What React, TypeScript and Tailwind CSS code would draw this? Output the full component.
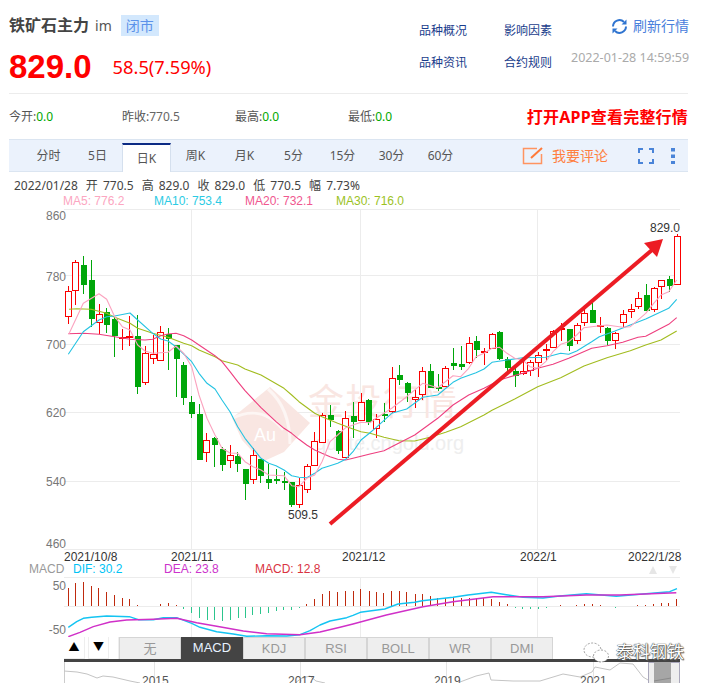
import React from "react";

const cjk = "font-['Noto_Sans','Noto_Sans_CJK_SC',sans-serif]";

// [wickTop, bodyTop, bodyBottom, wickBottom, red?]
const C: [number, number, number, number, number][] = [
  [243,259,334,357,1],[165,172,256,300,1],[153,180,240,267,0],[165,225,342,365,0],[296,328,352,388,1],
  [310,322,360,384,0],[335,342,393,455,0],[372,397,400,436,1],[334,393,396,424,1],[330,393,545,566,0],
  [424,445,532,540,1],[390,447,458,476,1],[364,382,464,466,1],[369,387,402,494,0],[420,420,462,576,0],
  [472,480,578,600,0],[574,592,626,638,0],[597,627,765,765,0],[684,706,742,770,1],[696,700,720,785,0],
  [726,732,780,798,0],[720,751,764,788,1],[740,754,777,802,0],[792,792,836,885,0],[728,751,821,838,1],
  [762,762,812,834,0],[776,822,834,852,0],[792,822,828,838,0],[802,828,834,855,0],[832,832,900,905,0],
  [820,840,898,908,1],[776,784,853,864,1],[680,709,781,782,1],[625,631,710,710,1],[600,631,646,665,0],
  [676,679,737,746,0],[618,640,755,760,1],[592,633,650,698,0],[563,592,644,644,1],[582,586,650,660,0],
  [628,643,670,698,1],[595,628,634,650,0],[487,520,618,625,1],[480,510,525,540,0],[532,534,564,592,0],
  [556,577,583,610,1],[487,499,566,585,1],[477,498,548,548,0],[507,547,552,558,0],[483,490,542,545,1],
  [428,474,482,496,0],[422,478,485,495,0],[396,415,472,478,1],[393,408,434,458,0],[430,438,441,480,1],
  [383,388,430,432,1],[378,381,461,464,0],[456,461,488,498,0],[485,499,513,546,0],[458,497,503,510,1],
  [465,472,496,512,1],[440,449,470,516,1],[418,432,436,468,1],[376,377,425,430,1],[354,369,372,408,1],
  [372,372,422,438,0],[354,361,406,416,1],[312,325,350,362,1],[295,316,353,353,0],[336,361,364,384,1],
  [366,370,407,420,0],[382,383,406,432,1],[314,328,352,366,1],[298,313,319,338,1],[262,278,304,312,1],
  [236,271,317,318,0],[246,250,311,322,1],[224,226,244,282,1],[212,223,242,262,0],[88,92,238,238,1],
];

const cx = (i: number) => Math.round(67.7 + 7.71 * i);
const Y = (z: number) => 205 + z / 3;

const path = (a: number[][], b: number[][]) =>
  [...a.map(([x, y]) => [50 + x / 3, Y(y)]), ...b.map(([x, y]) => [370 + x / 3, Y(y)])]
    .map(([x, y]) => `${x.toFixed(1)},${y.toFixed(1)}`)
    .join(" ");

const MA5 = path(
  [[57,386],[100,295],[147,266],[170,283],[194,335],[217,365],[240,375],[263,420],[285,438],[308,445],[354,442],[378,423],[401,445],[425,485],[447,570],[471,640],[495,690],[516,730],[540,744],[563,745],[585,770],[609,785],[633,795],[656,810],[702,812],[725,842],[747,845],[770,820],[794,810],[816,770],[840,710],[863,690],[887,668],[909,660],[933,652]],
  [[0,653],[18,640],[65,610],[110,575],[158,535],[203,548],[249,512],[272,515],[296,490],[318,455],[342,445],[366,430],[389,427],[411,445],[434,460],[458,465],[480,485],[503,490],[527,470],[549,440],[572,418],[596,410],[620,390],[642,368],[665,365],[711,360],[758,367],[781,365],[827,325],[851,295],[873,270],[896,260],[920,225]]
);
const MA10 = path(
  [[55,448],[100,380],[147,345],[170,335],[194,333],[240,324],[263,345],[308,385],[332,402],[354,408],[378,425],[401,447],[425,470],[447,505],[471,535],[495,552],[516,585],[540,620],[563,665],[585,700],[609,730],[633,760],[656,775],[678,782],[702,795],[725,812],[747,817],[770,818],[794,805],[816,790],[840,782],[863,775],[887,763],[909,740],[933,705]],
  [[0,683],[18,668],[65,625],[110,612],[158,577],[203,570],[249,532],[272,520],[318,503],[342,492],[366,472],[411,465],[458,458],[527,457],[572,445],[596,448],[620,438],[665,410],[688,395],[735,378],[781,360],[827,342],[896,310],[920,283]]
);
const MA20 = path(
  [[55,386],[100,385],[147,388],[194,395],[240,403],[285,405],[308,403],[332,392],[354,387],[378,385],[401,392],[425,405],[447,420],[495,452],[516,470],[540,500],[563,530],[585,557],[633,608],[678,650],[702,670],[725,685],[747,703],[770,720],[794,735],[816,745],[840,755],[863,763],[887,765],[909,760],[933,754]],
  [[0,747],[42,737],[65,725],[134,690],[203,640],[249,600],[296,570],[342,550],[389,525],[411,518],[458,505],[503,490],[549,478],[596,460],[665,430],[711,422],[758,412],[804,397],[827,394],[873,370],[896,358],[920,338]]
);
const MA30 = path(
  [[57,313],[80,311],[123,313],[170,325],[194,337],[240,355],[263,370],[308,385],[354,397],[401,415],[425,422],[447,435],[495,455],[516,467],[563,480],[585,492],[633,510],[702,550],[725,570],[747,590],[794,625],[816,635],[863,655],[909,672],[933,680]],
  [[0,685],[42,697],[87,707],[134,708],[180,697],[227,682],[272,665],[342,630],[366,616],[434,582],[503,545],[572,518],[642,483],[711,458],[781,437],[827,420],[873,405],[920,378]]
);

const M = (a: number[][], b: number[][]) =>
  [...a.map(([x, y]) => [x / 3, 540 + y / 3]), ...b.map(([x, y]) => [353 + x / 3, 540 + y / 3])]
    .map(([x, y]) => `${x.toFixed(1)},${y.toFixed(1)}`)
    .join(" ");
const DIF = M(
  [[205,262],[230,245],[250,235],[275,232],[320,228],[388,230],[415,239],[460,239],[490,233],[530,233],[575,250],[600,262],[650,275],[700,282],[740,289],[800,287],[860,288],[900,284],[930,272],[960,255],[990,243],[1040,233]],
  [[0,226],[22,217],[95,207],[135,192],[185,187],[208,182],[300,172],[345,165],[415,157],[460,164],[510,172],[570,174],[620,168],[700,161],[790,169],[870,162],[950,155],[972,146]]
);
const DEA = M(
  [[205,290],[240,277],[280,260],[330,246],[380,240],[460,238],[530,235],[590,248],[650,259],[730,273],[800,281],[900,284],[960,276],[1020,262]],
  [[0,252],[100,225],[210,200],[300,185],[420,170],[570,170],[700,165],[800,165],[970,158]]
);

const barsA = [[205,145],[226,128],[250,127],[274,138],[295,145],[319,155],[343,165],[367,174],[388,178],[411,196],[436,197],[481,193],[505,190],[527,194],[550,206],[574,218],[597,235],[620,240],[643,241],[667,243],[690,240],[713,235],[736,235],[757,225],[780,222],[805,219],[829,214],[850,210],[874,210],[897,204],[918,193],[943,177],[967,162],[988,153],[1012,157],[1036,153]];
const barsB = [[0,152],[22,148],[47,153],[70,155],[91,160],[115,153],[139,153],[160,156],[185,162],[208,162],[232,168],[253,174],[277,174],[301,172],[325,174],[347,174],[370,175],[391,175],[415,177],[439,185],[463,193],[485,203],[508,206],[532,207],[554,207],[578,203],[622,195],[670,195],[694,192],[716,192],[740,195],[763,202],[785,203],[853,195],[877,195],[900,192],[925,189],[946,190],[970,177]];
const bars = [...barsA.map(([x, y]) => [x / 3, y]), ...barsB.map(([x, y]) => [353 + x / 3, y])];

const axis = { fontFamily: "'Liberation Sans',sans-serif", fontSize: 12 };

function MainChart() {
  return (
    <svg width="706" height="429" viewBox="0 208 706 429" className="block">
      {/* Grid */}
      <g stroke="#ececec" strokeWidth="1" shapeRendering="crispEdges">
        {[209, 275, 344, 412, 481, 549, 577, 606, 637].map((y) => (
          <line key={y} x1="64" x2="680" y1={y + 0.5} y2={y + 0.5} />
        ))}
        {[191, 360, 537].map((x) => (
          <React.Fragment key={x}>
            <line x1={x + 0.5} x2={x + 0.5} y1="209" y2="549" />
            <line x1={x + 0.5} x2={x + 0.5} y1="577" y2="637" />
          </React.Fragment>
        ))}
      </g>
      {/* Site watermark */}
      <g>
        <path d="M232 418 L270 387 L310 423 L284 452 L262 462 L242 440 Z" fill="#f9e6e2" />
        <path d="M233 418 Q262 404 283 430" fill="none" stroke="#fdf6f4" strokeWidth="2.5" />
        <path d="M268 389 Q290 408 290 444" fill="none" stroke="#fdf6f4" strokeWidth="3" />
        <text x="254" y="441" fontSize="18" fill="#ffffff" fontFamily="'Liberation Sans',sans-serif">Au</text>
        <text x="308" y="415" fontSize="36" fill="#f9e6e2" fontFamily="'Noto Sans CJK SC',sans-serif" letterSpacing="1.5">金投行情</text>
        <text x="315" y="450" fontSize="20" fill="#eeeeee" fontFamily="'Liberation Sans',sans-serif">quote.cngold.org</text>
      </g>
      {/* Candles */}
      {C.map(([wt, bt, bb, wb, red], i) => {
        const x = cx(i);
        const top = Math.round(Y(bt));
        const h = Math.max(1, Math.round(Y(bb)) - top);
        const col = red ? "#fa0000" : "#00a60a";
        return (
          <g key={i} shapeRendering="crispEdges">
            <line x1={x + 0.5} x2={x + 0.5} y1={Y(wt)} y2={Y(wb)} stroke={col} strokeWidth="1" />
            {red ? (
              <rect x={x - 2.5} y={top + 0.5} width="6" height={h} fill="#fff" stroke={col} strokeWidth="1" />
            ) : (
              <rect x={x - 2.5} y={top} width="6" height={h} fill={col} />
            )}
          </g>
        );
      })}
      {/* Averages */}
      <g fill="none" strokeWidth="1.1" strokeLinejoin="round">
        <polyline points={MA30} stroke="#a2bc1f" />
        <polyline points={MA20} stroke="#ee3f7f" />
        <polyline points={MA10} stroke="#25c3e2" />
        <polyline points={MA5} stroke="#fba3bf" />
      </g>
      {/* Axis labels */}
      <g {...axis} fill="#777">
        {[["860", 220], ["780", 281], ["700", 349], ["620", 417], ["540", 486], ["460", 548]].map(([t, y]) => (
          <text key={t} x="66" y={y} textAnchor="end">{t}</text>
        ))}
        <text x="66" y="590" textAnchor="end">50</text>
        <text x="66" y="634" textAnchor="end">-50</text>
      </g>
      <g {...axis} fill="#333">
        <text x="288" y="519">509.5</text>
        <text x="650" y="232">829.0</text>
        <text x="64" y="561">2021/10/8</text>
        <text x="171" y="561">2021/11</text>
        <text x="342" y="561">2021/12</text>
        <text x="520" y="561">2022/1</text>
        <text x="628" y="561">2022/1/28</text>
      </g>
      <g {...axis}>
        <text x="29" y="573" fill="#999">MACD</text>
        <text x="73" y="573" fill="#00c3f5">DIF: 30.2</text>
        <text x="164" y="573" fill="#cc33cc">DEA: 23.8</text>
        <text x="255" y="573" fill="#d9333f">MACD: 12.8</text>
      </g>
      <path d="M649 574 L657 574 L653 566 Z M669 566 L677 566 L673 574 Z" fill="#e6e6e6" />
      {/* MACD */}
      <g strokeWidth="1" shapeRendering="crispEdges">
        {bars.map(([x, y], i) => {
          const rx = Math.round(x) + 0.5;
          const d = y > 199;
          return (
            <line key={i} x1={rx} x2={rx} y1={d ? 607 : 606} y2={540 + y / 3} stroke={d ? "#2cc58d" : "#bf2a0e"} />
          );
        })}
      </g>
      <g fill="none" strokeWidth="1.4" strokeLinejoin="round">
        <polyline points={DIF} stroke="#14c4f2" />
        <polyline points={DEA} stroke="#d030c8" />
      </g>
      {/* Trend arrow */}
      <line x1="330" y1="524" x2="652" y2="250" stroke="#ec1c24" strokeWidth="4" />
      <path d="M663 239 L644 243 L657 257 Z" fill="#ec1c24" />
    </svg>
  );
}

function Navigator() {
  return (
    <svg width="706" height="21" viewBox="0 662 706 21" className="block">
      <g stroke="#e4e4e4" shapeRendering="crispEdges">
        <line x1="64.5" x2="64.5" y1="662" y2="683" stroke="#ccc" />
        {[154, 300, 446, 593].map((x) => (
          <line key={x} x1={x + 0.5} x2={x + 0.5} y1="662" y2="683" />
        ))}
      </g>
      <polyline points="64,671 77,672 87,674 97,678 103,676 113,677 130,681 140,683" fill="none" stroke="#c4c4c4" />
      <polyline points="295,683 302,678 310,676 316,681 325,683" fill="none" stroke="#c4c4c4" />
      <polyline
        points="460,682 476,676 489,673 491,680 513,681 540,681 563,674 580,677 592,672 595,667 610,670 620,663 633,664 643,677 648,680"
        fill="none"
        stroke="#c4c4c4"
      />
      <g {...axis} fill="#555">
        <text x="142" y="685">2015</text>
        <text x="288" y="685">2017</text>
        <text x="434" y="685">2019</text>
        <text x="580" y="685">2021</text>
      </g>
      <rect x="648.5" y="662.5" width="31" height="22" fill="#eeeeee" stroke="#aaa8bc" shapeRendering="crispEdges" />
      <rect x="654" y="662" width="17" height="21" fill="#a6a6a6" />
      <polyline points="654,681 671,678" fill="none" stroke="#8a8a8a" />
    </svg>
  );
}

const tabs = ["分时", "5日", "日K", "周K", "月K", "5分", "15分", "30分", "60分"];
const pickers = ["无", "MACD", "KDJ", "RSI", "BOLL", "WR", "DMI"];
const quote = ["2022/01/28", "开 770.5", "高 829.0", "收 829.0", "低 770.5", "幅 7.73%"];

function Stat({ label, value, green = true }: { label: string; value: string; green?: boolean }) {
  return (
    <div className="w-[113px] whitespace-nowrap text-[12px] text-[#555]">
      {label}:<span className={green ? "text-[#00a800]" : "text-[#666]"}>{value}</span>
    </div>
  );
}

export default function App() {
  return (
    <div className={`relative h-[683px] w-[706px] overflow-hidden bg-white ${cjk}`}>
      <div className="ml-[9px] w-[679px]">
        {/* Header */}
        <div className="flex h-[94px] border-b border-[#ececec]">
          <div className="w-[410px] shrink-0 pt-[15px]">
            <div className="flex h-[21px] items-center">
              <span className="text-[16px] leading-[21px] font-bold text-[#444]">铁矿石主力</span>
              <span className="ml-[6px] text-[14px] leading-[21px] text-[#555]">im</span>
              <span className="ml-[9px] flex h-[21px] w-[38px] items-center justify-center bg-[#d3e8fd] text-[14px] text-[#5c92ea]">
                闭市
              </span>
            </div>
            <div className="mt-[13px] flex items-center">
              <span className="font-['Liberation_Sans',sans-serif] text-[33px] leading-[36px] font-bold text-[#f00]">
                829.0
              </span>
              <span className="ml-[21px] text-[18.3px] leading-[24px] text-[#f00]">58.5(7.59%)</span>
            </div>
          </div>
          <div className="grid h-fit w-[152px] shrink-0 grid-cols-[85px_67px] gap-y-[16px] pt-[23px] text-[12px] leading-[16px] text-[#1a3d8c]">
            <span className="whitespace-nowrap">品种概况</span>
            <span className="whitespace-nowrap">影响因素</span>
            <span className="whitespace-nowrap">品种资讯</span>
            <span className="whitespace-nowrap">合约规则</span>
          </div>
          <div className="flex flex-1 flex-col items-end pt-[16px]">
            <div className="flex items-center gap-[5px] text-[14px] leading-[20px] whitespace-nowrap text-[#4a80dc]">
              <svg width="17" height="17" viewBox="0 0 17 17" fill="none">
                <path d="M2 8.5a6.5 6.5 0 0 1 11-4.5" stroke="#2f74d0" strokeWidth="2" />
                <path d="M15 8.5a6.5 6.5 0 0 1-11 4.5" stroke="#2f74d0" strokeWidth="2" />
                <path d="M15.5 1.5v5h-5z M1.5 15.5v-5h5z" fill="#2f74d0" />
              </svg>
              刷新行情
            </div>
            <div className="mt-[13px] text-[12.5px] leading-[18px] whitespace-nowrap text-[#aaa]">2022-01-28 14:59:59</div>
          </div>
        </div>
        {/* Stats */}
        <div className="flex h-[45px] items-center justify-between">
          <div className="flex">
            <Stat label="今开" value="0.0" />
            <Stat label="昨收" value="770.5" green={false} />
            <Stat label="最高" value="0.0" />
            <Stat label="最低" value="0.0" />
          </div>
          <div className="text-[16px] font-bold tracking-[0.2px] whitespace-nowrap text-[#f00]">打开APP查看完整行情</div>
        </div>
        {/* Tabs */}
        <div className="flex h-[33px] items-stretch border-y border-[#dbe5f1] bg-[#ebf2fc] pl-[15px]">
          {tabs.map((t) =>
            t === "日K" ? (
              <div
                key={t}
                className="mt-[3px] -mb-px flex w-[49px] items-center justify-center border-x border-t-[2px] border-x-[#d5e0ee] border-t-[#0c2b84] bg-white text-[12px] text-[#555]"
              >
                {t}
              </div>
            ) : (
              <div key={t} className="flex w-[49px] items-center justify-center text-[12px] text-[#555]">
                {t}
              </div>
            )
          )}
          <div className="ml-[57px] flex items-center">
            <svg width="22" height="18" viewBox="0 0 22 18" fill="none">
              <path d="M15 1.5H1.5v15h18V7" stroke="#ff9460" strokeWidth="1.5" />
              <path d="M9 11 L20 1" stroke="#ff7a3a" strokeWidth="2" />
            </svg>
            <span className="ml-[8px] text-[14px] whitespace-nowrap text-[#ff7f3f]">我要评论</span>
          </div>
          <div className="ml-[30px] flex items-center">
            <svg width="16" height="16" viewBox="0 0 16 16" fill="none" stroke="#4a84d8" strokeWidth="2">
              <path d="M1 5V1h4M11 1h4v4M15 11v4h-4M5 15H1v-4" />
            </svg>
            <svg className="ml-[16px]" width="6" height="16" viewBox="0 0 6 16" fill="#4a84d8">
              <rect x="1" y="0" width="4" height="3.5" />
              <rect x="1" y="6.5" width="4" height="3.5" />
              <rect x="1" y="13" width="4" height="3" />
            </svg>
          </div>
        </div>
      </div>
      {/* Quote lines */}
      <div className="ml-[14px] flex h-[14px] gap-[8px] pt-[6px] text-[12px] leading-[15px] whitespace-nowrap text-[#444] [word-spacing:2px]">
        {quote.map((q) => (
          <span key={q}>{q}</span>
        ))}
      </div>
      <div className="mt-[8px] ml-[63px] flex h-[14px] font-['Liberation_Sans',sans-serif] text-[12px] leading-[15px] whitespace-nowrap">
        <span className="w-[91px] text-[#fca6c1]">MA5: 776.2</span>
        <span className="w-[91px] text-[#2ccbe4]">MA10: 753.4</span>
        <span className="w-[91px] text-[#f0578f]">MA20: 732.1</span>
        <span className="text-[#9cc21f]">MA30: 716.0</span>
      </div>
      <MainChart />
      {/* Indicator picker */}
      <div className="ml-[64px] flex h-[22px] w-[616px]">
        <div className="flex w-[21px] items-center justify-center border-r border-b border-[#eee] text-[11px] text-black">▲</div>
        <div className="ml-[3px] flex w-[21px] items-center justify-center border-x border-b border-[#eee] text-[11px] text-black">▼</div>
        <div className="w-[10px] border-r border-[#eee]" />
        {pickers.map((p) =>
          p === "MACD" ? (
            <div key={p} className="flex w-[62px] items-center justify-center bg-[#444] font-['Liberation_Sans',sans-serif] text-[13px] text-[#e8f2ff]">
              {p}
            </div>
          ) : (
            <div key={p} className="flex w-[62px] items-center justify-center border-x border-t border-[#d5d5d5] bg-[#eee] font-['Liberation_Sans','Noto_Sans_CJK_SC',sans-serif] text-[13px] text-[#999]">
              {p}
            </div>
          )
        )}
      </div>
      <div className="ml-[64px] h-[3px] w-[616px] bg-[#444]" />
      <Navigator />
      {/* Publisher watermark */}
      <div className="absolute top-[642px] left-[583px] flex items-center">
        <svg width="27" height="22" viewBox="0 0 27 22" fill="#fff" stroke="#777" strokeWidth="0.7" strokeDasharray="2 1.5">
          <ellipse cx="9.5" cy="8" rx="8.5" ry="7" />
          <ellipse cx="18" cy="14" rx="7.5" ry="6" />
        </svg>
        <span className="mt-[-2px] ml-[6px] text-[17px] leading-[22px] whitespace-nowrap text-white [text-shadow:0_0_1px_#333,0_0_1px_#333,1px_1px_1px_#666]">
          泰科钢铁
        </span>
      </div>
    </div>
  );
}
